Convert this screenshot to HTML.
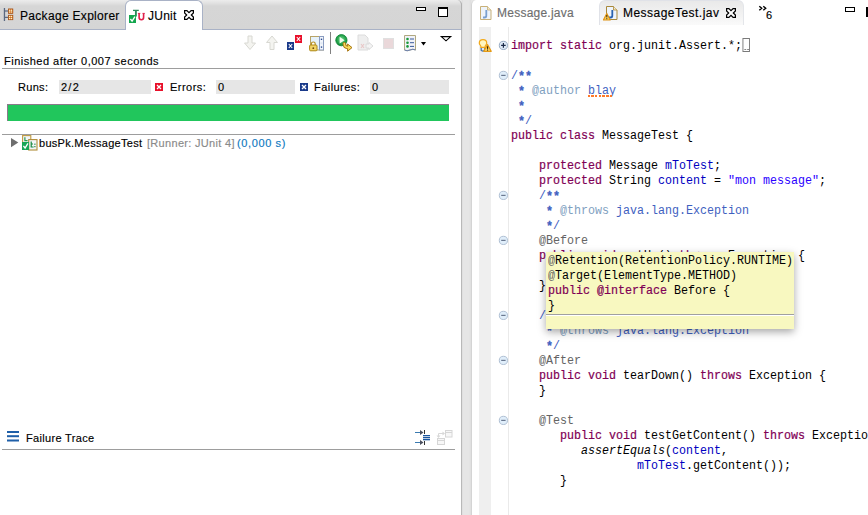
<!DOCTYPE html>
<html><head><meta charset="utf-8">
<style>
*{margin:0;padding:0;box-sizing:border-box}
html,body{width:868px;height:515px;overflow:hidden;background:#e5e5e5;position:relative;font-family:"Liberation Sans",sans-serif;font-size:11px;color:#000}
.abs{position:absolute}
.ui{font-family:"Liberation Sans",sans-serif;font-size:11px;white-space:nowrap;position:absolute;line-height:normal;-webkit-text-stroke:0.15px currentColor}
.tab{font-size:12px}
/* left panel */
#lhead{left:0;top:0;width:462px;height:30px;border-right:1px solid #b0b0b0;background:linear-gradient(#ececec 0,#e2e2e2 3px,#d6d6d6 6px,#d5d5d5 100%);border-bottom:1px solid #a9b2c6;border-top-right-radius:5px}
#jtab{left:125px;top:0;width:78px;height:30px;background:#fff;border:1px solid #a9b2c6;border-bottom:none;border-radius:6px 6px 0 0}
#sash{left:462px;top:0;width:9px;height:515px;background:linear-gradient(90deg,#dadada 0,#e6e6e6 1px,#e6e6e6 7px,#dedede 9px)}
#lpanel{left:0;top:0;width:462px;height:515px;background:#fff;border-right:1px solid #b9b9b9;border-top-right-radius:5px}
.sep{position:absolute;height:1px;background:#9d9d9d}
.field{position:absolute;background:#e6e6e6;height:14px}
pre.code{position:absolute;font-family:"Liberation Mono",monospace;font-size:12.5px;line-height:15px;white-space:pre;color:#000;transform:scaleX(0.93336);transform-origin:0 0}
.k{color:#7f0055;-webkit-text-stroke:0.2px #7f0055}
.jd{color:#3f5fbf}
.jt{color:#7f9fbf}
.f{color:#0000c0}
.s{color:#2a00ff}
.a{color:#646464}
.i{font-style:italic}
.ast{font-weight:bold;-webkit-text-stroke:0.3px #3f5fbf;position:relative;top:1px}
.fbox{display:inline-block;width:8px;height:14px;border:1px solid #7a7a7a;vertical-align:-3px;margin-left:0;position:relative}
.fbox:after{content:"";position:absolute;left:1.5px;top:9.5px;width:1.5px;height:1.5px;background:#888;box-shadow:3px 0 0 #888}
.sp{position:relative}
.sp:after{content:"";position:absolute;left:-1px;top:11px;width:27px;height:2px;background:repeating-linear-gradient(90deg,#ff7a2a 0 2.6px,transparent 2.6px 4px)}
</style></head><body>

<!-- ============ LEFT PANEL ============ -->
<div id="sash" class="abs"></div>
<div id="lpanel" class="abs"></div>
<div id="lhead" class="abs"></div>
<div id="jtab" class="abs"></div>

<!-- package explorer icon -->
<svg class="abs" style="left:0;top:0" width="20" height="29" viewBox="0 0 20 29">
  <rect x="3.8" y="8" width="1.3" height="13" fill="#5a6880"/>
  <rect x="4" y="10.4" width="4" height="1.2" fill="#5a6880"/>
  <rect x="4" y="16.8" width="4" height="1.2" fill="#5a6880"/>
  <rect x="8.3" y="8.9" width="4.6" height="4.6" fill="#d06a1c" stroke="#9a4810" stroke-width=".6"/>
  <rect x="8.3" y="15.2" width="4.6" height="4.6" fill="#d06a1c" stroke="#9a4810" stroke-width=".6"/>
  <g fill="#fff4c8"><circle cx="9.7" cy="10.3" r=".75"/><circle cx="11.5" cy="10.3" r=".75"/><circle cx="9.7" cy="12.1" r=".75"/><circle cx="11.5" cy="12.1" r=".75"/>
  <circle cx="9.7" cy="16.6" r=".75"/><circle cx="11.5" cy="16.6" r=".75"/><circle cx="9.7" cy="18.4" r=".75"/><circle cx="11.5" cy="18.4" r=".75"/></g>
</svg>
<div class="ui tab" style="left:20px;top:9px;letter-spacing:0.31px">Package Explorer</div>

<!-- junit icon -->
<svg class="abs" style="left:127px;top:8px" width="20" height="16" viewBox="0 0 20 16">
  <path d="M6 2.4 H11.8" stroke="#2a8a5a" stroke-width="1.3"/>
  <path d="M8.9 2.4 V8.5" stroke="#2a8a5a" stroke-width="1.9"/>
  <rect x="2" y="7" width="7" height="8" fill="#13a64e"/>
  <path d="M3.4 11 L5.1 13.2 L7.9 8.6" stroke="#fff" stroke-width="1.3" fill="none"/>
  <path d="M12.1 5.6 V9.3 Q12.1 11.7 14.4 11.7 Q16.6 11.7 16.6 9.3 V5.6" stroke="#e0204a" stroke-width="1.6" fill="none"/>
  <path d="M10.9 5.4 H13.3 M15.5 5.4 H17.8" stroke="#e0204a" stroke-width="1"/>
</svg>
<div class="ui tab" style="left:148px;top:9px;letter-spacing:0.25px">JUnit</div>
<svg class="abs" style="left:184px;top:10px" width="10" height="10" viewBox="0 0 10 10">
  <path d="M0.6 0.6 H2.9 L5 2.7 L7.1 0.6 H9.4 V2.9 L7.3 5 L9.4 7.1 V9.4 H7.1 L5 7.3 L2.9 9.4 H0.6 V7.1 L2.7 5 L0.6 2.9 Z" fill="#fff" stroke="#000" stroke-width="1.2" stroke-linejoin="miter"/>
</svg>

<!-- min/max -->
<div class="abs" style="left:416px;top:7px;width:10px;height:4px;border:1.5px solid #000;background:#fff"></div>
<div class="abs" style="left:438px;top:7px;width:10px;height:10px;border:1.5px solid #000;border-top-width:2.5px;background:#fff"></div>

<!-- toolbar -->
<svg class="abs" style="left:240px;top:30px" width="222" height="26" viewBox="0 0 222 26">
  <!-- down arrow -->
  <path d="M8 6 H12 V13 H15.5 L10 19.5 L4.5 13 H8 Z" fill="#f4f4f0" stroke="#d8d8d2" stroke-width="1"/>
  <!-- up arrow -->
  <path d="M30 19.5 H34 V12.5 H37.5 L32 6 L26.5 12.5 H30 Z" fill="#f4f4f0" stroke="#d8d8d2" stroke-width="1"/>
  <!-- failures only -->
  <rect x="47" y="12" width="7" height="8" fill="#1a3a8a"/>
  <path d="M48.8 14 L52.2 18 M52.2 14 L48.8 18" stroke="#fff" stroke-width="1.1"/>
  <rect x="55" y="5" width="7" height="8" fill="#e8102a"/>
  <path d="M56.8 7 L60.2 11 M60.2 7 L56.8 11" stroke="#fff" stroke-width="1.1"/>
  <!-- scroll lock -->
  <rect x="70.5" y="6.5" width="13" height="13.5" fill="#e6f2fb" stroke="#b8a468" stroke-width="1"/>
  <rect x="79.5" y="6.5" width="4" height="13.5" fill="#f2f6fc" stroke="#8a9cc0" stroke-width="1"/>
  <rect x="80.8" y="8.6" width="1.4" height="1.4" fill="#2a4a90"/>
  <rect x="80.5" y="12.3" width="2" height="2" fill="#dde6f2"/>
  <rect x="80.8" y="16.4" width="1.4" height="1.4" fill="#2a4a90"/>
  <path d="M71.4 15 V13.8 Q71.4 12 73.3 12 Q75.2 12 75.2 13.8 V15" stroke="#b89020" stroke-width="1.2" fill="#fff"/>
  <rect x="69.6" y="15" width="7.4" height="5.8" rx="1" fill="#f2d466" stroke="#b08a18" stroke-width="1"/>
  <circle cx="73.3" cy="18.2" r=".9" fill="#6a4a10"/>
  <!-- separator -->
  <rect x="90" y="2" width="1" height="22" fill="#808080"/>
  <!-- rerun -->
  <defs><radialGradient id="gg" cx="0.5" cy="0.45" r="0.6"><stop offset="0" stop-color="#7ad890"/><stop offset="0.6" stop-color="#2aa850"/><stop offset="1" stop-color="#0a7a30"/></radialGradient></defs>
  <circle cx="101.4" cy="10.2" r="5.6" fill="url(#gg)" stroke="#108a38" stroke-width=".9"/>
  <path d="M99.6 6.8 L104.6 10.2 L99.6 13.6 Z" fill="#f0fff0"/>
  <path d="M104.3 13.6 Q104.3 17.6 108.2 17.6" stroke="#a87410" stroke-width="3.4" fill="none" stroke-linecap="round"/>
  <path d="M107.6 14 L112 17.6 L107.6 21.2 Z" fill="#f6dc60" stroke="#a87410" stroke-width="1" stroke-linejoin="round"/>
  <path d="M104.3 13.6 Q104.3 17.6 108.4 17.6" stroke="#f6dc60" stroke-width="1.6" fill="none" stroke-linecap="round"/>
  <!-- rerun failures (disabled) -->
  <path d="M118 5 H125 L128 8 V20 H118 Z" fill="#eeeeee" stroke="#dcdcdc" stroke-width="1"/>
  <path d="M121 14 L124 18 M124 14 L121 18" stroke="#e8c8c8" stroke-width="1.2"/>
  <path d="M126 14 H129 V12.5 L133 16 L129 19.5 V18 H126 Z" fill="#f4f4f4" stroke="#d8d8d8" stroke-width=".9"/>
  <!-- stop (disabled) -->
  <rect x="143.5" y="8.5" width="10" height="10" fill="#ead8da" stroke="#e0e0e0" stroke-width="1"/>
  <!-- history -->
  <path d="M164.5 5.5 H175.5 V20 Q173 18.5 170 20 Q167 21.5 164.5 20 Z" fill="#f0f2f8" stroke="#b0a880" stroke-width="1"/>
  <path d="M164.5 20 Q167 21.5 170 20 Q173 18.5 175.5 20" stroke="#6a80b0" stroke-width="1" fill="none"/>
  <g fill="#1a9a3a"><circle cx="167.5" cy="9" r="1.3"/><circle cx="167.5" cy="12.7" r="1.3"/><circle cx="167.5" cy="16.4" r="1.3"/></g>
  <g stroke="#3a5a9a" stroke-width="1"><path d="M170 9 H174 M170 12.7 H174 M170 16.4 H174"/></g>
  <path d="M181 12 H186 L183.5 15.5 Z" fill="#000"/>
  <!-- view menu -->
  <path d="M201.3 6.6 H210.7 L206 10.8 Z" fill="#fff" stroke="#000" stroke-width="1.1" stroke-linejoin="miter"/>
</svg>

<div class="ui" style="left:4px;top:55px;letter-spacing:0.49px">Finished after 0,007 seconds</div>
<div class="sep" style="left:2px;top:68px;width:453px"></div>

<div class="ui" style="left:18px;top:81px;letter-spacing:0.3px">Runs:</div>
<div class="field" style="left:59px;top:80px;width:92px"></div>
<div class="ui" style="left:61px;top:81px;letter-spacing:1.25px">2/2</div>
<svg class="abs" style="left:155px;top:83px" width="8" height="8"><rect width="8" height="8" fill="#e8102a"/><path d="M2 2 L6 6 M6 2 L2 6" stroke="#fff" stroke-width="1.3"/></svg>
<div class="ui" style="left:170px;top:81px;letter-spacing:0.47px">Errors:</div>
<div class="field" style="left:216px;top:80px;width:79px"></div>
<div class="ui" style="left:218px;top:81px">0</div>
<svg class="abs" style="left:300px;top:83px" width="8" height="8"><rect width="8" height="8" fill="#1a3a8a"/><path d="M2 2 L6 6 M6 2 L2 6" stroke="#fff" stroke-width="1.3"/></svg>
<div class="ui" style="left:314px;top:81px;letter-spacing:0.45px">Failures:</div>
<div class="field" style="left:370px;top:80px;width:79px"></div>
<div class="ui" style="left:372px;top:81px">0</div>

<div class="abs" style="left:7px;top:104px;width:442px;height:17px;background:#21c65c;border-top:1px solid #8a7a8a;border-left:1px solid #8a7a8a"></div>

<div class="sep" style="left:2px;top:134px;width:453px"></div>

<svg class="abs" style="left:11px;top:138px" width="8" height="10" viewBox="0 0 8 10"><path d="M0 0 L7.3 4.6 L0 9.2 Z" fill="#6e6e6e"/></svg>
<svg class="abs" style="left:22px;top:135px" width="16" height="16" viewBox="0 0 16 16">
  <rect x="0.6" y="0.6" width="8.2" height="8" fill="#f2f5f8" stroke="#c09a40" stroke-width="1.1"/>
  <rect x="6.7" y="4.6" width="8.3" height="10.4" fill="#f2f5f8" stroke="#b08c38" stroke-width="1.1"/>
  <path d="M2.9 2.2 V5.6 H5.6" stroke="#2a9a50" stroke-width="1.2" fill="none"/>
  <path d="M9.2 6.5 V12 H11.6 M9.2 9 H11" stroke="#1a8a40" stroke-width="1.2" fill="none"/>
  <rect x="12.3" y="8.6" width="1.2" height="1.2" fill="#1a8a40"/><rect x="12.3" y="11" width="1.2" height="1.2" fill="#1a8a40"/>
  <rect x="0" y="7" width="7" height="8" fill="#19a656"/>
  <path d="M1.4 10.8 L3.1 13 L5.9 8.4" stroke="#fff" stroke-width="1.3" fill="none"/>
</svg>
<div class="ui" style="left:39px;top:137px;letter-spacing:0.29px">busPk.MessageTest</div>
<div class="ui" style="left:147px;top:137px;letter-spacing:0.31px;color:#8a8a8a">[Runner: JUnit 4]</div>
<div class="ui" style="left:237px;top:137px;letter-spacing:0.62px;color:#0d78c0">(0,000 s)</div>

<!-- failure trace -->
<svg class="abs" style="left:7px;top:431px" width="12" height="11"><g fill="#1f5fa8"><rect y="0" width="12" height="2"/><rect y="4.2" width="12" height="2"/><rect y="8.5" width="12" height="2"/></g></svg>
<div class="ui" style="left:26px;top:432px;letter-spacing:0.33px">Failure Trace</div>
<svg class="abs" style="left:414px;top:429px" width="40" height="17" viewBox="0 0 40 17">
  <path d="M1 3.5 H7" stroke="#3a7ab0" stroke-width="1"/><path d="M6 1 L9.5 3.5 L6 6 Z" fill="#4a5060"/>
  <path d="M1 13.5 H7" stroke="#3a7ab0" stroke-width="1"/><path d="M6 11 L9.5 13.5 L6 16 Z" fill="#4a5060"/>
  <rect x="10" y="1" width="1" height="4" fill="#333"/><rect x="10" y="12" width="1" height="4" fill="#333"/>
  <g fill="#1a56a0"><rect x="9" y="6" width="7" height="1.3"/><rect x="9" y="8" width="7" height="1.3"/><rect x="9" y="10" width="7" height="1.3"/></g>
  <rect x="31.5" y="1.5" width="6.5" height="6.5" fill="#f7f7f7" stroke="#d6d6d6"/><path d="M31.5 3.5 H38" stroke="#d6d6d6"/>
  <rect x="23.5" y="9.5" width="7" height="6" fill="#f7f7f7" stroke="#d6d6d6"/><path d="M23.5 11.5 H30.5" stroke="#d6d6d6"/>
  <path d="M24.5 8 V4.5 H29" stroke="#d8d8d8" stroke-width="1" fill="none"/><path d="M28.5 2.5 L31 4.5 L28.5 6.5 Z" fill="#d8d8d8"/><path d="M22.5 6.5 L24.5 9 L26.5 6.5 Z" fill="#d8d8d8"/>
</svg>
<div class="sep" style="left:2px;top:449px;width:453px"></div>


<!-- ============ EDITOR ============ -->
<div class="abs" style="left:471px;top:0;width:397px;height:515px;background:#fff;border-top-left-radius:5px;border-left:1px solid #d4d4d4"></div>


<!-- editor tabs -->
<div class="abs" style="left:599px;top:0;width:145px;height:25px;border-radius:6px 6px 0 0;background:linear-gradient(#e9e9e9,#f3f3f3 60%,#fafafa);border-left:1px solid #e0e2e8;border-top:1px solid #e0e2e8;border-right:1px solid #e4e6ea"></div>
<svg class="abs" style="left:479px;top:5px" width="14" height="16" viewBox="0 0 14 16">
  <path d="M1.5 1.5 H8.5 L12 5 V14.5 H1.5 Z" fill="#eef4fb" stroke="#c8b078" stroke-width="1"/>
  <path d="M8.5 1.5 V5 H12" fill="#f4e8c8" stroke="#c8b078" stroke-width=".8"/>
  <path d="M7.3 5 V10.8 Q7.3 12.5 5.5 12.5 H4" stroke="#7aa0d0" stroke-width="1.8" fill="none"/>
</svg>
<div class="ui tab" style="left:497px;top:6px;letter-spacing:0.24px;color:#6e6e6e">Message.java</div>
<svg class="abs" style="left:603px;top:5px" width="16" height="17" viewBox="0 0 16 17">
  <path d="M3.5 1.5 H10.5 L14 5 V14.5 H3.5 Z" fill="#eef4fb" stroke="#a8883a" stroke-width="1"/>
  <path d="M10.5 1.5 V5 H14" fill="#f4e8c8" stroke="#a8883a" stroke-width=".8"/>
  <path d="M9.3 5 V10.8 Q9.3 12.5 7.5 12.5 H6" stroke="#2a62b0" stroke-width="1.8" fill="none"/>
  <path d="M3.8 8.4 L7.2 15 H0.4 Z" fill="#f8d060" stroke="#e09414" stroke-width="1.2" stroke-linejoin="round"/>
  <rect x="3.3" y="10" width="1" height="2.4" fill="#3a2a00"/><rect x="3.3" y="13.2" width="1" height="1" fill="#3a2a00"/>
</svg>
<div class="ui tab" style="left:623px;top:6px;letter-spacing:0.47px">MessageTest.jav</div>
<svg class="abs" style="left:726px;top:8px" width="10" height="10" viewBox="0 0 10 10">
  <path d="M0.6 0.6 H2.9 L5 2.7 L7.1 0.6 H9.4 V2.9 L7.3 5 L9.4 7.1 V9.4 H7.1 L5 7.3 L2.9 9.4 H0.6 V7.1 L2.7 5 L0.6 2.9 Z" fill="#fff" stroke="#000" stroke-width="1.2" stroke-linejoin="miter"/>
</svg>
<svg class="abs" style="left:758px;top:5px" width="10" height="7" viewBox="0 0 10 7"><path d="M1.3 1.2 L3.7 3.2 L1.3 5.2 M5.3 1.2 L7.7 3.2 L5.3 5.2" stroke="#000" stroke-width="1.4" fill="none"/></svg>
<div class="ui tab" style="left:766px;top:9px;font-size:11px">6</div>
<div class="abs" style="left:845px;top:7px;width:10px;height:4.5px;border:1.5px solid #000;background:#fff"></div>
<div class="abs" style="left:866.4px;top:7px;width:1.6px;height:10px;background:#000"></div>

<!-- gutter -->
<div class="abs" style="left:479px;top:27px;width:12px;height:488px;background:#efefef"></div>
<div class="abs" style="left:508px;top:27px;width:1px;height:488px;background:#eaeaea"></div>
<!-- bulb + warning -->
<svg class="abs" style="left:476px;top:36px" width="20" height="20" viewBox="0 0 20 20">
  <path d="M5.2 11.2 V14.2 Q7 16 8.8 14.2 V11.2" stroke="#4a74a8" stroke-width="1.3" fill="#dde8f4"/>
  <path d="M5 11.3 Q5 9.8 3.9 8.7 Q3.3 7.9 3.3 6.9 Q3.3 3.6 7 3.6 Q10.7 3.6 10.7 6.9 Q10.7 7.9 10.1 8.7 Q9 9.8 9 11.3 Z" fill="#fff6c0" stroke="#f2a818" stroke-width="1.2"/>
  <path d="M11.5 8.6 L15.2 15.3 H7.8 Z" fill="#f8d468" stroke="#e69a14" stroke-width="1.3" stroke-linejoin="round"/>
  <rect x="11" y="10.3" width="1.1" height="2.6" fill="#3a2400"/><rect x="11" y="13.5" width="1.1" height="1.1" fill="#3a2400"/>
</svg>
<!-- fold icons -->
<svg class="abs" style="left:498px;top:40px" width="11" height="11" viewBox="0 0 11 11"><circle cx="5.4" cy="5.4" r="4.1" fill="#dfeaf6" stroke="#98acc4" stroke-width="1"/><path d="M3.1 5.4 H7.7 M5.4 3.1 V7.7" stroke="#1a2a48" stroke-width="1.2"/></svg>
<svg class="abs" style="left:498px;top:70px" width="11" height="11" viewBox="0 0 11 11"><circle cx="5.4" cy="5.4" r="4.1" fill="#e0eefa" stroke="#b0c0d4" stroke-width="1"/><path d="M3.2 5.4 H7.6" stroke="#6a7890" stroke-width="1.2"/></svg>
<svg class="abs" style="left:498px;top:190px" width="11" height="11" viewBox="0 0 11 11"><circle cx="5.4" cy="5.4" r="4.1" fill="#e0eefa" stroke="#b0c0d4" stroke-width="1"/><path d="M3.2 5.4 H7.6" stroke="#6a7890" stroke-width="1.2"/></svg>
<svg class="abs" style="left:498px;top:235px" width="11" height="11" viewBox="0 0 11 11"><circle cx="5.4" cy="5.4" r="4.1" fill="#e0eefa" stroke="#b0c0d4" stroke-width="1"/><path d="M3.2 5.4 H7.6" stroke="#6a7890" stroke-width="1.2"/></svg>
<svg class="abs" style="left:498px;top:310px" width="11" height="11" viewBox="0 0 11 11"><circle cx="5.4" cy="5.4" r="4.1" fill="#e0eefa" stroke="#b0c0d4" stroke-width="1"/><path d="M3.2 5.4 H7.6" stroke="#6a7890" stroke-width="1.2"/></svg>
<svg class="abs" style="left:498px;top:355px" width="11" height="11" viewBox="0 0 11 11"><circle cx="5.4" cy="5.4" r="4.1" fill="#e0eefa" stroke="#b0c0d4" stroke-width="1"/><path d="M3.2 5.4 H7.6" stroke="#6a7890" stroke-width="1.2"/></svg>
<svg class="abs" style="left:498px;top:415px" width="11" height="11" viewBox="0 0 11 11"><circle cx="5.4" cy="5.4" r="4.1" fill="#e0eefa" stroke="#b0c0d4" stroke-width="1"/><path d="M3.2 5.4 H7.6" stroke="#6a7890" stroke-width="1.2"/></svg>


<pre class="code" style="left:511px;top:38px"><span class="k">import</span> <span class="k">static</span> org.junit.Assert.*;<span class="fbox"></span>

<span class="jd">/<b class="ast">*</b><b class="ast">*</b></span>
<span class="jd"> <b class="ast">*</b> </span><span class="jt">@author</span> <span class="jd"><span class="sp">blay</span></span>
<span class="jd"> <b class="ast">*</b></span>
<span class="jd"> <b class="ast">*</b>/</span>
<span class="k">public</span> <span class="k">class</span> MessageTest {

    <span class="k">protected</span> Message <span class="f">mToTest</span>;
    <span class="k">protected</span> String <span class="f">content</span> = <span class="s">"mon message"</span>;
    <span class="jd">/<b class="ast">*</b><b class="ast">*</b></span>
    <span class="jd"> <b class="ast">*</b> </span><span class="jt">@throws</span> <span class="jd">java.lang.Exception</span>
    <span class="jd"> <b class="ast">*</b>/</span>
    <span class="a">@Before</span>
    <span class="k">public</span> <span class="k">void</span> setUp() <span class="k">throws</span> Exception {
        <span class="f">mToTest</span> = <span class="k">new</span> Message(<span class="f">content</span>);
    }

    <span class="jd">/<b class="ast">*</b><b class="ast">*</b></span>
    <span class="jd"> <b class="ast">*</b> </span><span class="jt">@throws</span> <span class="jd">java.lang.Exception</span>
    <span class="jd"> <b class="ast">*</b>/</span>
    <span class="a">@After</span>
    <span class="k">public</span> <span class="k">void</span> tearDown() <span class="k">throws</span> Exception {
    }

    <span class="a">@Test</span>
       <span class="k">public</span> <span class="k">void</span> testGetContent() <span class="k">throws</span> Exception {
          <span class="i">assertEquals</span>(<span class="f">content</span>,
                  <span class="f">mToTest</span>.getContent());
       }
</pre>

<!-- tooltip -->
<div class="abs" style="left:546px;top:252px;width:248px;height:77px;background:#f8f8c0;box-shadow:0 3px 8px rgba(0,0,0,.35)"></div>
<div class="abs" style="left:546px;top:314px;width:248px;height:1px;background:#a0a0a0;box-shadow:0 1px 0 #fff"></div>
<pre class="code" style="left:548px;top:254px"><span class="a">@</span>Retention(RetentionPolicy.RUNTIME)
<span class="a">@</span>Target(ElementType.METHOD)
<span class="k">public</span> <span class="k">@interface</span> Before {
}</pre>

</body></html>
